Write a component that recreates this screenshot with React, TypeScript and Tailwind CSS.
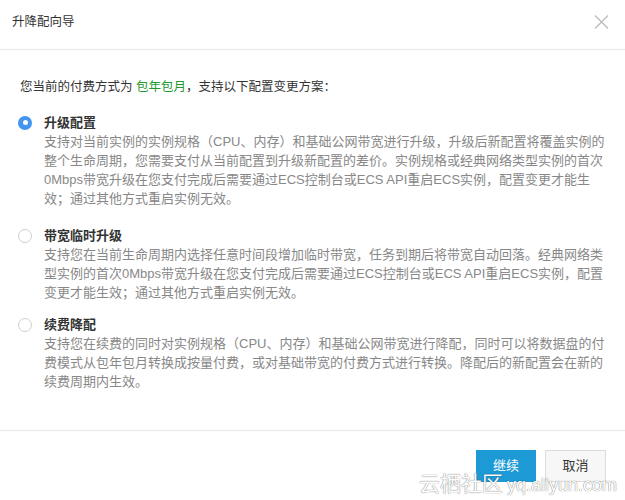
import React, { useState } from 'react';

const FONT = "font-['Liberation_Sans','Noto_Sans_CJK_SC',sans-serif]";

type Plan = {
  id: string;
  title: string;
  lines: string[];
};

const PLANS: Plan[] = [
  {
    id: 'upgrade',
    title: '升级配置',
    lines: [
      '支持对当前实例的实例规格（CPU、内存）和基础公网带宽进行升级，升级后新配置将覆盖实例的',
      '整个生命周期，您需要支付从当前配置到升级新配置的差价。实例规格或经典网络类型实例的首次',
      '0Mbps带宽升级在您支付完成后需要通过ECS控制台或ECS API重启ECS实例，配置变更才能生',
      '效；通过其他方式重启实例无效。',
    ],
  },
  {
    id: 'temp',
    title: '带宽临时升级',
    lines: [
      '支持您在当前生命周期内选择任意时间段增加临时带宽，任务到期后将带宽自动回落。经典网络类',
      '型实例的首次0Mbps带宽升级在您支付完成后需要通过ECS控制台或ECS API重启ECS实例，配置',
      '变更才能生效；通过其他方式重启实例无效。',
    ],
  },
  {
    id: 'downgrade',
    title: '续费降配',
    lines: [
      '支持您在续费的同时对实例规格（CPU、内存）和基础公网带宽进行降配，同时可以将数据盘的付',
      '费模式从包年包月转换成按量付费，或对基础带宽的付费方式进行转换。降配后的新配置会在新的',
      '续费周期内生效。',
    ],
  },
];

function Radio({ checked }: { checked: boolean }) {
  if (checked) {
    return (
      <span className="flex h-[14px] w-[14px] shrink-0 items-center justify-center rounded-full bg-[#4195f0]">
        <span className="h-[5px] w-[5px] rounded-full bg-white" />
      </span>
    );
  }
  return <span className="h-[14px] w-[14px] shrink-0 rounded-full border border-[#cfcfcf] bg-white" />;
}

export default function App() {
  const [selected, setSelected] = useState('upgrade');

  return (
    <div className={`relative flex h-[500px] w-[625px] flex-col overflow-hidden bg-white text-[#333] ${FONT}`}>
      {/* Header */}
      <div className="flex h-[50px] shrink-0 items-start justify-between border-b border-[#e8e8e8] pl-[12px] pr-[16px] pt-[12px]">
        <span className="text-[12.5px] leading-[20px] text-[#333]">升降配向导</span>
        <button className="mt-[3px] text-[#bcbcbc]">
          <svg width="15" height="14" viewBox="0 0 15 14" fill="none" stroke="currentColor" strokeWidth="1.3">
            <path d="M1 0.5 L14 13.5 M14 0.5 L1 13.5" />
          </svg>
        </button>
      </div>

      {/* Body */}
      <div className="flex flex-1 flex-col pl-[18px] pt-[28px]">
        <p className="pl-[2px] text-[12.5px] leading-[19px]">
          您当前的付费方式为 <span className="text-[#22992f]">包年包月</span>，支持以下配置变更方案：
        </p>

        <div className="mt-[16px] flex flex-col">
          {PLANS.map((plan, idx) => (
            <div
              key={plan.id}
              className={`flex cursor-pointer items-start gap-[12px] ${idx === 0 ? 'mb-[18px]' : 'mb-[13px]'}`}
              onClick={() => setSelected(plan.id)}
            >
              <div className="flex h-[19px] items-center">
                <Radio checked={selected === plan.id} />
              </div>
              <div className="flex flex-col">
                <span className="text-[13px] font-bold leading-[19px] text-[#333]">{plan.title}</span>
                {plan.lines.map((line, i) => (
                  <span key={i} className="whitespace-nowrap text-[13px] leading-[19px] text-[#888]">
                    {line}
                  </span>
                ))}
              </div>
            </div>
          ))}
        </div>
      </div>

      {/* Footer */}
      <div className="flex h-[70px] shrink-0 items-start justify-end gap-[9px] border-t border-[#e8e8e8] pr-[19px] pt-[19px]">
        <button className="h-[32px] w-[60px] bg-[#1d9ad6] text-[13px] text-white">继续</button>
        <button className="h-[32px] w-[61px] border border-[#dcdcdc] bg-[#f7f7f7] text-[13px] text-[#333]">取消</button>
      </div>

      {/* watermark */}
      <div className="pointer-events-none absolute bottom-[6px] right-[8px] flex items-baseline gap-[4px] whitespace-nowrap leading-none text-white [text-shadow:0_0_1px_rgba(0,0,0,0.5),0_0_1px_rgba(0,0,0,0.3)]">
        <span className="text-[21px]">云栖社区</span>
        <span className="text-[18px]">yq.aliyun.com</span>
      </div>
    </div>
  );
}
